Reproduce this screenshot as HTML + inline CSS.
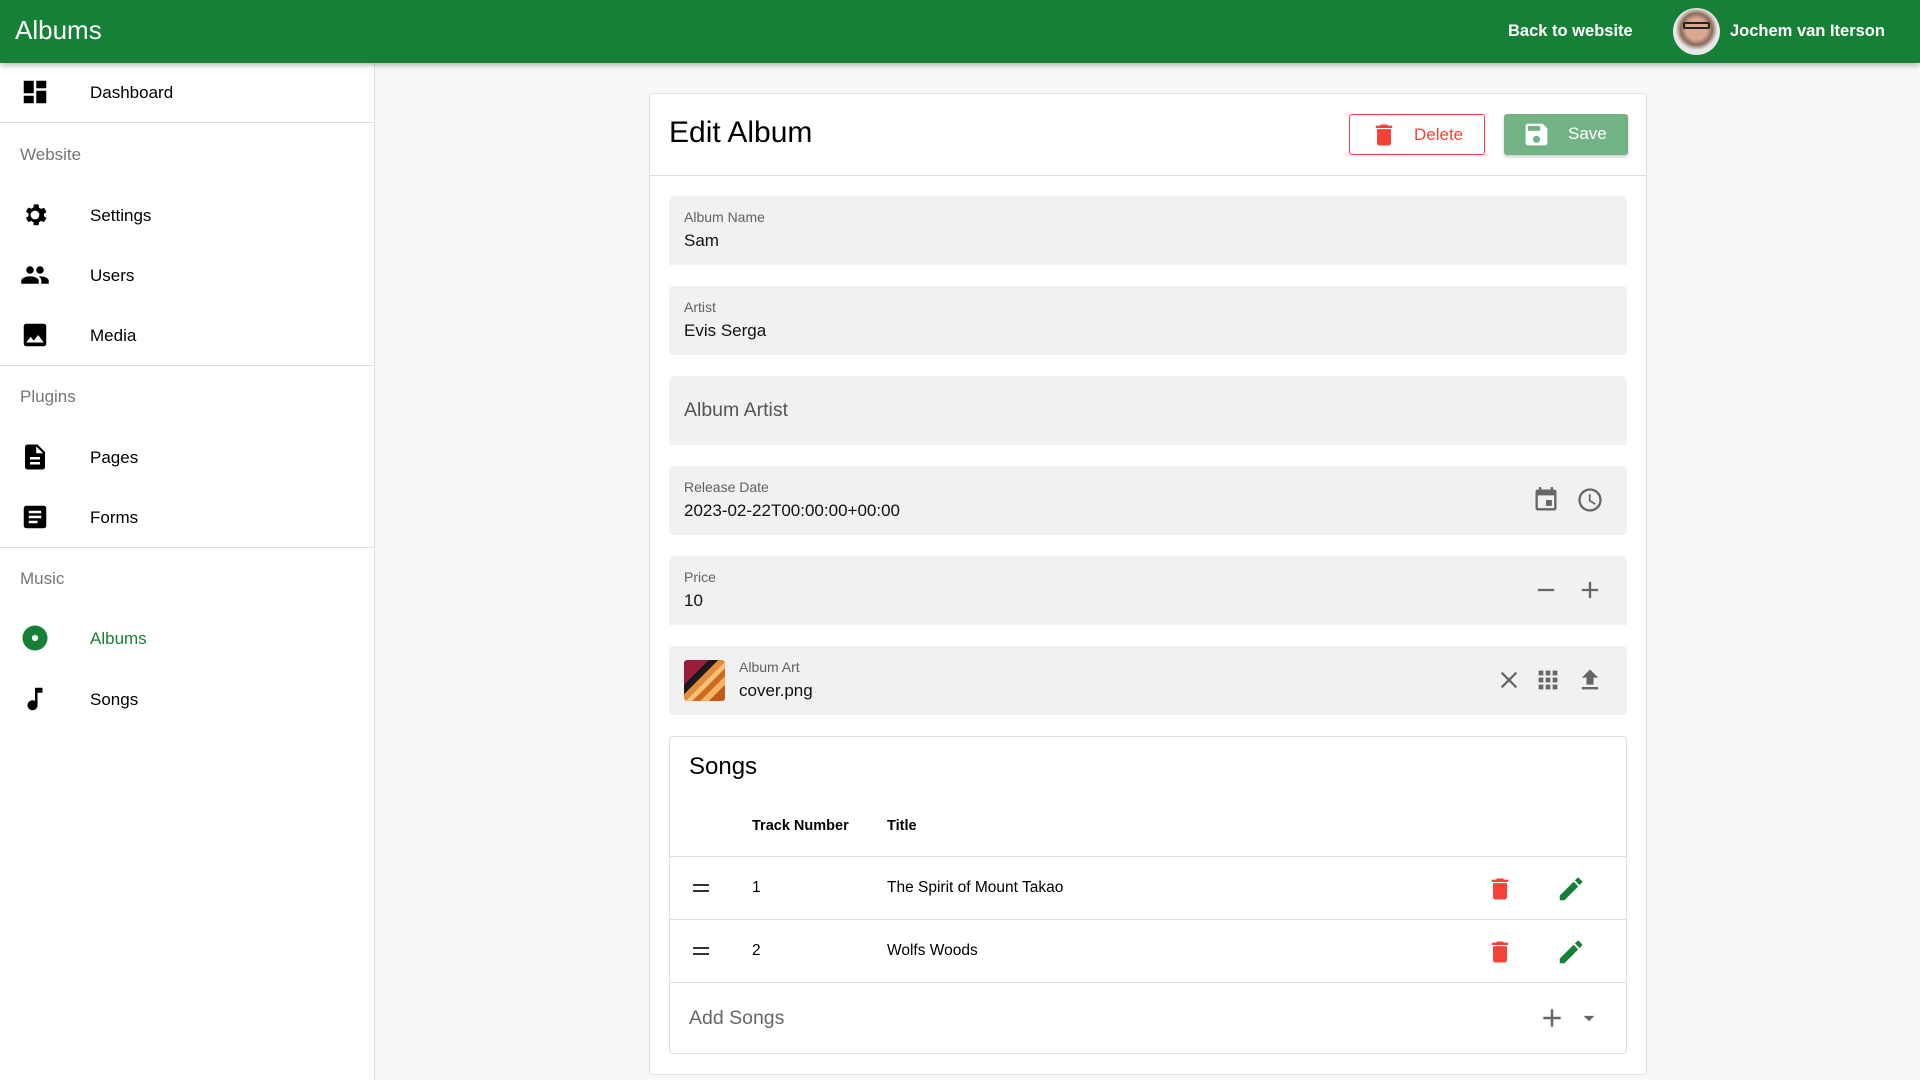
<!DOCTYPE html>
<html><head><meta charset="utf-8"><style>
*{box-sizing:border-box;margin:0;padding:0}
body{width:1920px;height:1080px;overflow:hidden;background:#f8f8f8;font-family:"Liberation Sans",sans-serif;color:#000;position:relative}
.a{position:absolute}
.hdr{left:0;top:0;width:1920px;height:63px;background:#178037;box-shadow:0 2px 6px rgba(0,0,0,.3);z-index:5;color:#fff}
.side{left:0;top:63px;width:375px;height:1017px;background:#fff;border-right:1px solid #ddd}
.it{position:absolute;left:0;width:374px;height:40px;font-size:17px;display:flex;align-items:center}
.it svg{position:absolute;left:20px;width:30px;height:30px}
.it span{position:absolute;left:90px;top:11px}
.lab{position:absolute;left:20px;font-size:17px;color:#757575}
.hr{position:absolute;left:0;width:374px;height:1px;background:#ddd}
.card{left:649px;top:93px;width:998px;height:982px;background:#fff;border:1px solid #e0e0e0;border-radius:4px}
.f{position:absolute;left:19px;width:958px;height:69px;background:#f1f1f1;border-radius:4px 4px 0 0}
.f .l{position:absolute;left:15px;top:13px;font-size:14px;color:#616161}
.f .v{position:absolute;left:15px;top:35px;font-size:17px;color:#111}
.f svg{position:absolute;width:28px;height:28px;top:20px}
.songs{position:absolute;left:19px;top:642px;width:958px;height:318px;border:1px solid #e0e0e0;border-radius:4px;background:#fff}
.row{position:absolute;left:0;width:956px;border-top:1px solid #e0e0e0;font-size:15.5px}
</style></head><body>
<div class="a hdr">
 <div class="a" style="left:15px;top:15px;font-size:26px">Albums</div>
 <div class="a" style="left:1508px;top:22px;font-size:16.5px;font-weight:bold">Back to website</div>
 <div class="a" style="left:1673px;top:8px;width:47px;height:47px;border-radius:50%;background:radial-gradient(circle at 50% 45%,#d9a892 0 30%,#8a6a5a 45%,#e8e8e8 60%)"></div>
 <div class="a" style="left:1683px;top:22px;width:27px;height:7px;border:2px solid #222;border-radius:2px"></div>
 <div class="a" style="left:1730px;top:22px;font-size:16.5px;font-weight:bold">Jochem van Iterson</div>
</div>
<div class="a side">
 <div class="it" style="top:9px"><svg viewBox="0 0 24 24"><path d="M3 13h8V3H3zm0 8h8v-6H3zm10 0h8V11h-8zm0-18v6h8V3z"/></svg><span>Dashboard</span></div>
 <div class="hr" style="top:59px"></div>
 <div class="lab" style="top:82px">Website</div>
 <div class="it" style="top:132px"><svg viewBox="0 0 24 24"><path d="M19.14 12.94a7 7 0 000-1.88l2.03-1.58-1.92-3.32-2.39.96a7 7 0 00-1.62-.94L14.88 3.5h-3.84l-.36 2.54a7 7 0 00-1.62.94l-2.39-.96-1.92 3.32 2.03 1.58a7 7 0 000 1.88l-2.03 1.58 1.92 3.32 2.39-.96c.5.38 1.04.7 1.62.94l.36 2.54h3.84l.36-2.54a7 7 0 001.62-.94l2.39.96 1.92-3.32zM12 15.5A3.5 3.5 0 1112 8.5a3.5 3.5 0 010 7z"/></svg><span>Settings</span></div>
 <div class="it" style="top:192px"><svg viewBox="0 0 24 24"><path d="M16 11a3 3 0 100-6 3 3 0 000 6zm-8 0a3 3 0 100-6 3 3 0 000 6zm0 2c-2.3 0-7 1.2-7 3.5V19h14v-2.5C15 14.2 10.3 13 8 13zm8 0c-.3 0-.6 0-1 .1 1.2.8 2 2 2 3.4V19h6v-2.5c0-2.3-4.7-3.5-7-3.5z"/></svg><span>Users</span></div>
 <div class="it" style="top:252px"><svg viewBox="0 0 24 24"><path d="M21 19V5a2 2 0 00-2-2H5a2 2 0 00-2 2v14a2 2 0 002 2h14a2 2 0 002-2zM8.5 13.5l2.5 3 3.5-4.5 4.5 6H5z"/></svg><span>Media</span></div>
 <div class="hr" style="top:302px"></div>
 <div class="lab" style="top:324px">Plugins</div>
 <div class="it" style="top:374px"><svg viewBox="0 0 24 24"><path d="M14 2H6a2 2 0 00-2 2v16a2 2 0 002 2h12a2 2 0 002-2V8zm2 16H8v-2h8zm0-4H8v-2h8zm-3-5V3.5L18.5 9z"/></svg><span>Pages</span></div>
 <div class="it" style="top:434px"><svg viewBox="0 0 24 24"><path d="M19 3H5a2 2 0 00-2 2v14a2 2 0 002 2h14a2 2 0 002-2V5a2 2 0 00-2-2zm-5 14H7v-2h7zm3-4H7v-2h10zm0-4H7V7h10z"/></svg><span>Forms</span></div>
 <div class="hr" style="top:484px"></div>
 <div class="lab" style="top:506px">Music</div>
 <div class="it" style="top:555px;color:#178037"><svg viewBox="0 0 24 24"><path fill="#178037" d="M12 2a10 10 0 100 20 10 10 0 000-20zm0 12.5a2.5 2.5 0 110-5 2.5 2.5 0 010 5z"/></svg><span>Albums</span></div>
 <div class="it" style="top:616px"><svg viewBox="0 0 24 24"><path d="M12 3v10.55A4 4 0 1014 17V7h4V3z"/></svg><span>Songs</span></div>
</div>
<div class="a card">
 <div class="a" style="left:19px;top:22px;font-size:30px">Edit Album</div>
 <div class="a" style="left:699px;top:20px;width:136px;height:41px;border:1px solid #f44336;border-radius:3px;color:#f44336;font-size:17px">
  <svg class="a" style="left:20px;top:6px" width="28" height="28" viewBox="0 0 24 24"><path fill="#f44336" d="M6 19a2 2 0 002 2h8a2 2 0 002-2V7H6zM19 4h-3.5l-1-1h-5l-1 1H5v2h14z"/></svg>
  <span class="a" style="left:64px;top:10px">Delete</span></div>
 <div class="a" style="left:854px;top:20px;width:124px;height:41px;background:#72b386;border-radius:3px;color:#fff;font-size:17px;box-shadow:0 2px 3px rgba(0,0,0,.2)">
  <svg class="a" style="left:18px;top:6px" width="29" height="29" viewBox="0 0 24 24"><path fill="#fff" d="M17 3H5a2 2 0 00-2 2v14a2 2 0 002 2h14a2 2 0 002-2V7zm-5 16a3 3 0 110-6 3 3 0 010 6zm3-10H5V5h10z"/></svg>
  <span class="a" style="left:64px;top:10px">Save</span></div>
 <div class="a" style="left:0;top:81px;width:996px;height:1px;background:#e0e0e0"></div>
 <div class="f" style="top:102px"><div class="l">Album Name</div><div class="v">Sam</div></div>
 <div class="f" style="top:192px"><div class="l">Artist</div><div class="v">Evis Serga</div></div>
 <div class="f" style="top:282px"><div class="v" style="top:23px;font-size:19.5px;color:#555">Album Artist</div></div>
 <div class="f" style="top:372px"><div class="l">Release Date</div><div class="v">2023-02-22T00:00:00+00:00</div>
  <svg style="left:863px" viewBox="0 0 24 24"><path fill="#666" d="M17 12h-5v5h5zM16 1v2H8V1H6v2H5a2 2 0 00-2 2v14a2 2 0 002 2h14a2 2 0 002-2V5a2 2 0 00-2-2h-1V1zm3 18H5V8h14z"/></svg>
  <svg style="left:907px" viewBox="0 0 24 24"><path fill="#666" d="M12 2a10 10 0 100 20 10 10 0 000-20zm0 18a8 8 0 110-16 8 8 0 010 16zm.5-13H11v6l5.2 3.2.8-1.3-4.5-2.7z"/></svg></div>
 <div class="f" style="top:462px"><div class="l">Price</div><div class="v">10</div>
  <svg style="left:863px" viewBox="0 0 24 24"><path fill="#666" d="M19 13H5v-2h14z"/></svg>
  <svg style="left:907px" viewBox="0 0 24 24"><path fill="#666" d="M19 13h-6v6h-2v-6H5v-2h6V5h2v6h6z"/></svg></div>
 <div class="f" style="top:552px">
  <div class="a" style="left:15px;top:14px;width:41px;height:41px;border-radius:3px;background:linear-gradient(135deg,#9a1d3a 0 30%,#1b1b1b 30% 42%,#e58a3a 42% 52%,#f6c27a 52% 60%,#d06a20 60% 70%,#f5b466 70% 80%,#c05a18 80%)"></div>
  <div class="l" style="left:70px">Album Art</div><div class="v" style="left:70px">cover.png</div>
  <svg style="left:826px" viewBox="0 0 24 24"><path fill="#666" d="M19 6.4L17.6 5 12 10.6 6.4 5 5 6.4 10.6 12 5 17.6 6.4 19 12 13.4 17.6 19 19 17.6 13.4 12z"/></svg>
  <svg style="left:865px" viewBox="0 0 24 24"><path fill="#666" d="M4 8h4V4H4zm6 12h4v-4h-4zm-6 0h4v-4H4zm0-6h4v-4H4zm6 0h4v-4h-4zm6-10v4h4V4zm-6 4h4V4h-4zm6 6h4v-4h-4zm0 6h4v-4h-4z"/></svg>
  <svg style="left:907px" viewBox="0 0 24 24"><path fill="#666" d="M9 16h6v-6h4l-7-7-7 7h4zm-4 2h14v2H5z"/></svg></div>
 <div class="songs">
  <div class="a" style="left:19px;top:16px;font-size:24px">Songs</div>
  <div class="a" style="left:82px;top:81px;font-size:14.5px;font-weight:bold">Track Number</div>
  <div class="a" style="left:217px;top:81px;font-size:14.5px;font-weight:bold">Title</div>
  <div class="row" style="top:119px;height:64px">
   <div class="a" style="left:23px;top:27px;width:16px;height:8px;border-top:2.5px solid #333;border-bottom:2.5px solid #333"></div>
   <div class="a" style="left:82px;top:22px">1</div><div class="a" style="left:217px;top:22px">The Spirit of Mount Takao</div>
   <svg class="a" style="left:816px;top:17px" width="28" height="30" viewBox="0 0 24 24"><path fill="#f44336" d="M6 19a2 2 0 002 2h8a2 2 0 002-2V7H6zM19 4h-3.5l-1-1h-5l-1 1H5v2h14z"/></svg>
   <svg class="a" style="left:886px;top:17px" width="30" height="30" viewBox="0 0 24 24"><path fill="#178037" d="M3 17.25V21h3.75L17.8 9.94l-3.75-3.75zM20.7 7.04a1 1 0 000-1.41l-2.34-2.34a1 1 0 00-1.41 0l-1.83 1.83 3.75 3.75z"/></svg></div>
  <div class="row" style="top:182px;height:64px">
   <div class="a" style="left:23px;top:27px;width:16px;height:8px;border-top:2.5px solid #333;border-bottom:2.5px solid #333"></div>
   <div class="a" style="left:82px;top:22px">2</div><div class="a" style="left:217px;top:22px">Wolfs Woods</div>
   <svg class="a" style="left:816px;top:17px" width="28" height="30" viewBox="0 0 24 24"><path fill="#f44336" d="M6 19a2 2 0 002 2h8a2 2 0 002-2V7H6zM19 4h-3.5l-1-1h-5l-1 1H5v2h14z"/></svg>
   <svg class="a" style="left:886px;top:17px" width="30" height="30" viewBox="0 0 24 24"><path fill="#178037" d="M3 17.25V21h3.75L17.8 9.94l-3.75-3.75zM20.7 7.04a1 1 0 000-1.41l-2.34-2.34a1 1 0 00-1.41 0l-1.83 1.83 3.75 3.75z"/></svg></div>
  <div class="row" style="top:245px;height:71px">
   <div class="a" style="left:19px;top:24px;font-size:19.5px;color:#666">Add Songs</div>
   <svg class="a" style="left:867px;top:20px" width="30" height="30" viewBox="0 0 24 24"><path fill="#666" d="M19 13h-6v6h-2v-6H5v-2h6V5h2v6h6z"/></svg>
   <svg class="a" style="left:906px;top:22px" width="26" height="26" viewBox="0 0 24 24"><path fill="#666" d="M7 10l5 5 5-5z"/></svg></div>
 </div>
</div>
</body></html>
